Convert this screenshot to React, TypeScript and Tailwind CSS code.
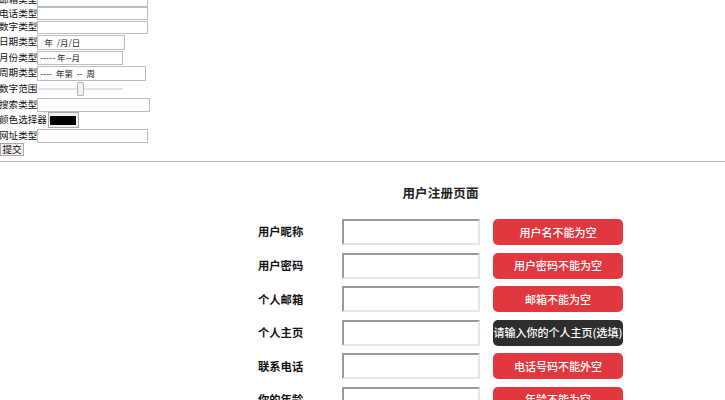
import React from "react";

const cjk = { fontFamily: '"Noto Sans CJK SC", "Noto Sans", sans-serif' };

function TopRow({ label, h, children }: { label: string; h: string; children?: React.ReactNode }) {
  return (
    <div className={`flex items-center ${h}`}>
      <span className="-ml-[1px] text-[9.6px] leading-none text-[#111] whitespace-nowrap">{label}</span>
      {children}
    </div>
  );
}

const rows = [
  { label: "用户昵称", msg: "用户名不能为空", dark: false },
  { label: "用户密码", msg: "用户密码不能为空", dark: false },
  { label: "个人邮箱", msg: "邮箱不能为空", dark: false },
  { label: "个人主页", msg: "请输入你的个人主页(选填)", dark: true },
  { label: "联系电话", msg: "电话号码不能外空", dark: false },
  { label: "你的年龄", msg: "年龄不能为空", dark: false },
];

export default function App() {
  return (
    <div className="w-[725px] h-[400px] overflow-hidden bg-white" style={cjk}>
      <div className="-mt-[7px] flex flex-col">
        <TopRow label="邮箱类型" h="h-[14px]">
          <div className="w-[111px] h-[13px] border border-[#bdbdbd] bg-white" />
        </TopRow>
        <TopRow label="电话类型" h="h-[13px]">
          <div className="w-[111px] h-[13px] border border-[#bdbdbd] bg-white" />
        </TopRow>
        <TopRow label="数字类型" h="h-[14px]">
          <div className="w-[111px] h-[13px] border border-[#bdbdbd] bg-white" />
        </TopRow>
        <TopRow label="日期类型" h="h-[16px]">
          <div className="w-[88px] h-[15px] border border-[#bdbdbd] bg-white flex items-center pl-[6px] text-[8.5px] text-[#222] whitespace-nowrap">
            年&nbsp;&nbsp;/月/日
          </div>
        </TopRow>
        <TopRow label="月份类型" h="h-[15px]">
          <div className="w-[86px] h-[14px] border border-[#bdbdbd] bg-white flex items-center pl-[2px] text-[8.5px] text-[#222] whitespace-nowrap">
            -----&nbsp;年--月
          </div>
        </TopRow>
        <TopRow label="周期类型" h="h-[16px]">
          <div className="w-[109px] h-[15px] border border-[#bdbdbd] bg-white flex items-center pl-[2px] text-[8.5px] text-[#222] whitespace-nowrap">
            ----&nbsp;&nbsp;年第&nbsp;&nbsp;--&nbsp;&nbsp;周
          </div>
        </TopRow>
        <TopRow label="数字范围" h="h-[16px]">
          <div className="relative w-[85px] h-[16px] ml-[1px]">
            <div className="absolute left-0 right-0 top-[7px] h-[2px] bg-[#e3e3e3]" />
            <div className="absolute left-[39px] top-[1px] w-[7px] h-[14px] border border-[#b5b5b5] bg-[#f2f2f2] rounded-[1px]" />
          </div>
        </TopRow>
        <TopRow label="搜索类型" h="h-[15px]">
          <div className="w-[113px] h-[14px] border border-[#bdbdbd] bg-white" />
        </TopRow>
        <TopRow label="颜色选择器" h="h-[16px]">
          <div className="ml-[1px] w-[31px] h-[16px] border border-[#a9a9a9] bg-[#efefef] flex items-center justify-center">
            <div className="w-[26px] h-[9px] bg-black" />
          </div>
        </TopRow>
        <TopRow label="网址类型" h="h-[15px]">
          <div className="w-[111px] h-[14px] border border-[#bdbdbd] bg-white" />
        </TopRow>
        <div className="h-[13px] flex items-center">
          <div className="w-[24px] h-[13px] border border-[#a9a9a9] bg-[#efefef] flex items-center justify-center text-[9.6px] leading-none text-[#111]">
            提交
          </div>
        </div>
      </div>

      <div className="mt-[5px] h-[1px] bg-[#b8b8b8]" />

      <div className="pl-[258px] w-[623px]">
        <div className="pt-[24px] text-center text-[12.5px] font-bold leading-[14px] text-[#222] tracking-[0.2px]">
          用户注册页面
        </div>
        <div className="mt-[19px] flex flex-col gap-[7.6px]">
          {rows.map((r) => (
            <div key={r.label} className="flex items-center h-[26px]">
              <span className="w-[84px] text-[11.3px] font-bold text-[#111] leading-none">{r.label}</span>
              <div className="w-[138px] h-[26px] bg-white border-2 border-t-[#9a9a9a] border-l-[#9a9a9a] border-b-[#e6e6e6] border-r-[#e6e6e6]" />
              <div
                className={`ml-[13px] w-[130px] h-[26px] rounded-[5px] flex items-center justify-center text-white text-[11px] font-medium whitespace-nowrap leading-none ${
                  r.dark ? "bg-[#2e2e2e]" : "bg-[#e0383e]"
                }`}
              >
                {r.msg}
              </div>
            </div>
          ))}
        </div>
      </div>
    </div>
  );
}
